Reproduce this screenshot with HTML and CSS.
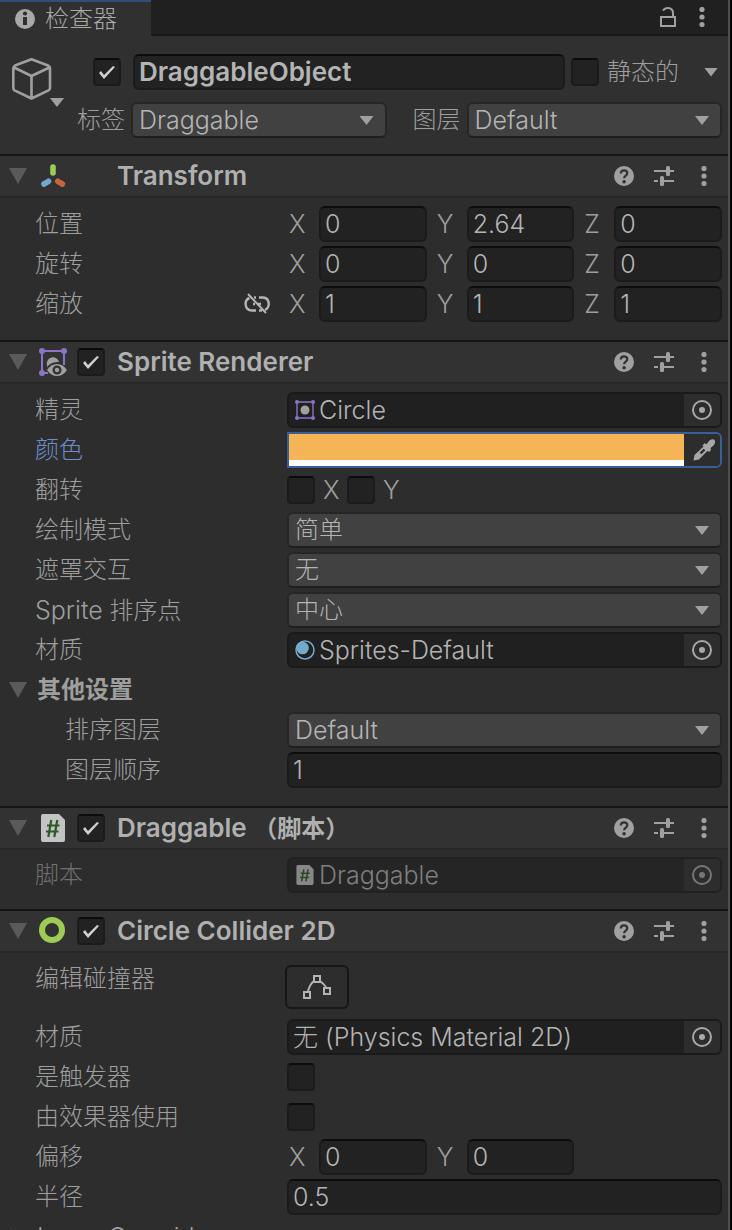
FILE: index.html
```
<!DOCTYPE html>
<html lang="zh-CN">
<head>
  <meta charset="UTF-8">
  <meta name="viewport" content="width=device-width, initial-scale=1.0">
  <title>检查器</title>
  <link rel="stylesheet" href="styles.css">
</head>
<body>
  <svg class="defs" aria-hidden="true">
    <symbol id="i-dots" viewBox="0 0 20 20">
      <circle cx="10" cy="2.5" r="2.6"/><circle cx="10" cy="10" r="2.6"/><circle cx="10" cy="17.5" r="2.6"/>
    </symbol>
    <symbol id="i-help" viewBox="0 0 20 20">
      <circle cx="10" cy="10" r="10"/>
      <path d="M6.8 7.6C6.8 5.4 8.2 4.3 10.1 4.3S13.3 5.5 13.3 7.3C13.3 9.6 10.1 9.7 10.1 12.2" fill="none" stroke="#323232" stroke-width="2.2"/>
      <circle cx="10.1" cy="15.7" r="1.8" fill="#323232"/>
    </symbol>
    <symbol id="i-preset" viewBox="0 0 20 20">
      <path d="M0 5h12M16 5h4M0 15h4M10 15h10" stroke="currentColor" stroke-width="2"/>
      <rect x="12" y="0" width="4" height="10" rx="1.5"/><rect x="6" y="10" width="4" height="10" rx="1.5"/>
    </symbol>
    <symbol id="i-target" viewBox="0 0 20 20">
      <circle cx="10" cy="10" r="9" fill="none" stroke="currentColor" stroke-width="2"/><circle cx="10" cy="10" r="3"/>
    </symbol>
    <symbol id="i-script" viewBox="0 0 24 28">
      <path d="M2 0h16l6 6v20a2 2 0 0 1-2 2H2a2 2 0 0 1-2-2V2a2 2 0 0 1 2-2z" fill="#c4c4c4"/>
      <path d="M10.3 6L7.3 23M16.3 6l-3 17M6 11.5h12.5M5 17.5h12.5" fill="none" stroke="#2c5a26" stroke-width="2.2"/>
    </symbol>
  </svg>

  <div class="inspector">
    <div class="tabbar">
      <div class="tab">
        <svg class="tab-icon" viewBox="0 0 20 20"><circle cx="10" cy="10" r="10"/><circle cx="10" cy="4.5" r="2.1" fill="#303030"/><path d="M8 8h4v8H8z" fill="#303030"/></svg>
        <span>检查器</span>
      </div>
      <div class="tab-tools">
        <button class="icon-btn" aria-label="锁定"><svg viewBox="0 0 20 20"><path d="M3 10h14v9H3zM15 10V6.5C15 3 13 1 10 1C7.5 1 6 2 5 3.6" fill="none" stroke="currentColor" stroke-width="2"/></svg></button>
        <button class="icon-btn" aria-label="菜单"><svg><use href="#i-dots"/></svg></button>
      </div>
    </div>

    <div class="object">
      <button class="object-icon" aria-label="图标">
        <svg class="outline" viewBox="0 0 46 50" stroke-width="2.6" stroke-linejoin="round"><path d="M19.5 1.3L36 7.5Q38 8.5 38 10.5V30Q38 31.5 36.5 32.3L19.5 40.5L2.5 32.3Q1.3 31.5 1.3 30V10.5Q1.3 8.5 3 7.5ZM2 9.5L19.5 18L37.5 9.5M19.5 18V40.5"/></svg>
        <span class="arrow"></span>
      </button>
      <div class="object-rows">
        <div class="object-row name-row">
          <input type="checkbox" aria-label="启用" checked>
          <input type="text" class="bold" aria-label="名称" value="DraggableObject">
          <input type="checkbox" id="static">
          <label for="static">静态的</label>
          <button class="static-menu" aria-label="静态选项"><span class="arrow"></span></button>
        </div>
        <div class="object-row tag-row">
          <label for="tag">标签</label>
          <div class="dropdown"><select id="tag"><option>Draggable</option></select></div>
          <label for="layer">图层</label>
          <div class="dropdown"><select id="layer"><option>Default</option></select></div>
        </div>
      </div>
    </div>

    <section class="component">
      <header>
        <button class="fold" aria-label="折叠"></button>
        <svg class="comp-icon" viewBox="0 0 28 28" stroke-width="5.6" stroke-linecap="round"><path d="M14 5v6" stroke="#9ccb56"/><path d="M9.5 19.3L5 22" stroke="#75a9cb"/><path d="M18.8 19.3l4.5 2.7" stroke="#c9653b"/></svg>
        <h2>Transform</h2>
        <div class="tools">
          <button class="icon-btn" aria-label="帮助"><svg><use href="#i-help"/></svg></button>
          <button class="icon-btn" aria-label="预设"><svg><use href="#i-preset"/></svg></button>
          <button class="icon-btn" aria-label="菜单"><svg><use href="#i-dots"/></svg></button>
        </div>
      </header>
      <div class="fields">
        <div class="row">
          <span class="name">位置</span>
          <div class="vector">
            <label for="px">X</label><input type="text" id="px" value="0">
            <label for="py">Y</label><input type="text" id="py" value="2.64">
            <label for="pz">Z</label><input type="text" id="pz" value="0">
          </div>
        </div>
        <div class="row">
          <span class="name">旋转</span>
          <div class="vector">
            <label for="rx">X</label><input type="text" id="rx" value="0">
            <label for="ry">Y</label><input type="text" id="ry" value="0">
            <label for="rz">Z</label><input type="text" id="rz" value="0">
          </div>
        </div>
        <div class="row">
          <span class="name">缩放
            <button class="link-btn" aria-label="约束比例"><svg class="outline" viewBox="0 0 26 22" stroke-width="2.4"><path d="M5.5 5C0 7 0 17 8 17.5H12M10 4.5h2M15 4.5h4C26 5 26.5 14 21 17M9 11h2M13 11h4M15 17.5h3"/><path d="M4 1l18 19" stroke-width="2"/></svg></button>
          </span>
          <div class="vector">
            <label for="sx">X</label><input type="text" id="sx" value="1">
            <label for="sy">Y</label><input type="text" id="sy" value="1">
            <label for="sz">Z</label><input type="text" id="sz" value="1">
          </div>
        </div>
      </div>
    </section>

    <section class="component">
      <header>
        <button class="fold" aria-label="折叠"></button>
        <svg class="comp-icon" viewBox="0 0 28 28">
          <path d="M3 3h22v14M3 3v22h6" fill="none" stroke="#8b73c6" stroke-width="2"/>
          <g fill="#8b73c6"><circle cx="3" cy="3" r="3"/><circle cx="25" cy="3" r="3"/><circle cx="3" cy="25" r="3"/></g>
          <path d="M8 17a6 6 0 1 1 12-3C15 14 11 15 8 19z" fill="#a0a0a0"/>
          <path d="M8 22Q12 16 18 16T28 22Q24 28 18 28T8 22z" fill="#a0a0a0"/>
          <circle cx="18" cy="22" r="4.5" fill="#323232"/><circle cx="18" cy="22" r="2.2" fill="#a0a0a0"/>
        </svg>
        <input type="checkbox" aria-label="启用 Sprite Renderer" checked>
        <h2>Sprite Renderer</h2>
        <div class="tools">
          <button class="icon-btn" aria-label="帮助"><svg><use href="#i-help"/></svg></button>
          <button class="icon-btn" aria-label="预设"><svg><use href="#i-preset"/></svg></button>
          <button class="icon-btn" aria-label="菜单"><svg><use href="#i-dots"/></svg></button>
        </div>
      </header>
      <div class="fields">
        <div class="row">
          <span class="name">精灵</span>
          <div class="object-field">
            <svg class="asset-icon" viewBox="0 0 20 20"><path d="M2 2h16v16H2z" fill="none" stroke="#8b73c6" stroke-width="1.4"/><g fill="#8b73c6"><circle cx="2" cy="2" r="2"/><circle cx="18" cy="2" r="2"/><circle cx="2" cy="18" r="2"/><circle cx="18" cy="18" r="2"/></g><circle cx="10" cy="10" r="4.5" fill="#a0a0a0"/></svg>
            <span class="asset">Circle</span>
            <button class="picker" aria-label="选择精灵"><svg><use href="#i-target"/></svg></button>
          </div>
        </div>
        <div class="row focused">
          <label class="name" for="color">颜色</label>
          <div class="color-field">
            <input type="color" id="color" value="#f5b556">
            <button class="picker" aria-label="吸管"><svg class="dropper" viewBox="0 0 22 22"><path d="M0.5 21.5L1.5 16L10.5 7.5L9.5 6.5L11.5 4.3L13.5 5.2L16 2C18 0 20.5 0 21.5 1C22.5 3 22 5 20.5 6.5L17.5 9L18 11L16 13L14.5 11.8L6 20.5Z"/><path d="M7.5 14.5L11.5 10.5" stroke="#2d2d2d" stroke-width="2.4"/></svg></button>
          </div>
        </div>
        <div class="row">
          <span class="name">翻转</span>
          <div class="checks">
            <input type="checkbox" id="flipx"><label for="flipx">X</label>
            <input type="checkbox" id="flipy"><label for="flipy">Y</label>
          </div>
        </div>
        <div class="row">
          <label class="name" for="drawmode">绘制模式</label>
          <div class="dropdown"><select id="drawmode" class="zh"><option>简单</option></select></div>
        </div>
        <div class="row">
          <label class="name" for="mask">遮罩交互</label>
          <div class="dropdown"><select id="mask" class="zh"><option>无</option></select></div>
        </div>
        <div class="row">
          <label class="name" for="sortpoint"><span><span class="latin">Sprite</span> 排序点</span></label>
          <div class="dropdown"><select id="sortpoint" class="zh"><option>中心</option></select></div>
        </div>
        <div class="row">
          <span class="name">材质</span>
          <div class="object-field">
            <svg class="asset-icon" viewBox="0 0 20 20"><circle cx="10" cy="10" r="9" fill="none" stroke="#75a9cb" stroke-width="1.5"/><circle cx="7.5" cy="8" r="6.3" fill="#75a9cb"/></svg>
            <span class="asset">Sprites-Default</span>
            <button class="picker" aria-label="选择材质"><svg><use href="#i-target"/></svg></button>
          </div>
        </div>
        <div class="row foldout">
          <button class="fold" aria-label="折叠"></button>
          <span class="bold">其他设置</span>
        </div>
        <div class="row indent">
          <label class="name" for="sortlayer">排序图层</label>
          <div class="dropdown"><select id="sortlayer"><option>Default</option></select></div>
        </div>
        <div class="row indent">
          <label class="name" for="order">图层顺序</label>
          <input type="text" id="order" value="1">
        </div>
      </div>
    </section>

    <section class="component">
      <header>
        <button class="fold" aria-label="折叠"></button>
        <svg class="comp-icon"><use href="#i-script"/></svg>
        <input type="checkbox" aria-label="启用 Draggable" checked>
        <h2>Draggable <span class="zh">（脚本）</span></h2>
        <div class="tools">
          <button class="icon-btn" aria-label="帮助"><svg><use href="#i-help"/></svg></button>
          <button class="icon-btn" aria-label="预设"><svg><use href="#i-preset"/></svg></button>
          <button class="icon-btn" aria-label="菜单"><svg><use href="#i-dots"/></svg></button>
        </div>
      </header>
      <div class="fields script-fields">
        <div class="row disabled">
          <span class="name">脚本</span>
          <div class="object-field">
            <svg class="asset-icon"><use href="#i-script"/></svg>
            <span class="asset">Draggable</span>
            <button class="picker" aria-label="选择脚本" disabled><svg><use href="#i-target"/></svg></button>
          </div>
        </div>
      </div>
    </section>

    <section class="component">
      <header>
        <button class="fold" aria-label="折叠"></button>
        <svg class="comp-icon" viewBox="0 0 28 28"><circle cx="13" cy="13" r="10" fill="none" stroke="#9ccb56" stroke-width="6"/></svg>
        <input type="checkbox" aria-label="启用 Circle Collider 2D" checked>
        <h2>Circle Collider 2D</h2>
        <div class="tools">
          <button class="icon-btn" aria-label="帮助"><svg><use href="#i-help"/></svg></button>
          <button class="icon-btn" aria-label="预设"><svg><use href="#i-preset"/></svg></button>
          <button class="icon-btn" aria-label="菜单"><svg><use href="#i-dots"/></svg></button>
        </div>
      </header>
      <div class="fields">
        <div class="row edit-row">
          <span class="name">编辑碰撞器</span>
          <button class="edit-btn" aria-label="编辑碰撞器"><svg class="outline" viewBox="0 0 28 24" stroke-width="2"><path d="M1 17h6v6H1zM11 1h6v6h-6zM21 13h6v6h-6z"/><path d="M5 16Q7 9 11 6M17 6Q21 9 23 12"/></svg></button>
        </div>
        <div class="row">
          <span class="name">材质</span>
          <div class="object-field">
            <span class="asset">无 (Physics Material 2D)</span>
            <button class="picker" aria-label="选择材质"><svg><use href="#i-target"/></svg></button>
          </div>
        </div>
        <div class="row">
          <label class="name" for="trigger">是触发器</label>
          <div class="checks"><input type="checkbox" id="trigger"></div>
        </div>
        <div class="row">
          <label class="name" for="effector">由效果器使用</label>
          <div class="checks"><input type="checkbox" id="effector"></div>
        </div>
        <div class="row">
          <span class="name">偏移</span>
          <div class="vector">
            <label for="ox">X</label><input type="text" id="ox" value="0">
            <label for="oy">Y</label><input type="text" id="oy" value="0">
          </div>
        </div>
        <div class="row">
          <label class="name" for="radius">半径</label>
          <input type="text" id="radius" value="0.5">
        </div>
        <div class="row foldout">
          <button class="fold closed" aria-label="展开"></button>
          <span class="latin">Layer Overrides</span>
        </div>
      </div>
    </section>
  </div>
</body>
</html>
```
FILE: styles.css
```
* {
  box-sizing: border-box;
}
body {
  margin: 0;
  height: 100vh;
  overflow: hidden;
  background-color: #2d2d2d;
  color: #9e9e9e;
  font-family: Inter, "Noto Sans CJK SC", sans-serif;
  font-size: 24px;
  font-weight: 300;
  line-height: 36px;
}
.defs {
  display: none;
}
svg {
  display: block;
  fill: currentColor;
}
.outline {
  fill: none;
  stroke: currentColor;
}
button,
input,
select {
  margin: 0;
  padding: 0;
  border: none;
  background: none;
  color: #b4b4b4;
  font: inherit;
}
.inspector {
  min-height: 100vh;
  border-right: 2px solid #050505;
  box-shadow: inset -2px 0 #4d4d4d;
  padding-right: 2px;
}
.bold {
  font-weight: 600;
}
.latin {
  font-size: 25px;
}

/* Tabs */
.tabbar {
  display: flex;
  justify-content: space-between;
  height: 36px;
  background-color: #202020;
}
.tab {
  display: flex;
  align-items: center;
  gap: 10px;
  width: 151px;
  padding-left: 15px;
  background-color: #303030;
  border-top: 2px solid #2c4f7c;
  color: #a8a8a8;
}
.tab-icon {
  width: 20px;
  height: 20px;
}
.tab-tools {
  display: flex;
  flex: 1;
  align-items: center;
  justify-content: flex-end;
  gap: 14px;
  padding-right: 16px;
  border-bottom: 2px solid #1a1a1a;
}
.icon-btn {
  width: 20px;
  height: 20px;
}
.icon-btn svg {
  width: 20px;
  height: 20px;
  color: #a0a0a0;
}

/* Form controls */
input[type="text"] {
  width: 100%;
  min-width: 0;
  height: 36px;
  padding: 0 4px;
  background-color: #222;
  border: 2px solid #1b1b1b;
  border-top-color: #0c0c0c;
  border-radius: 6px;
  font-size: 25px;
}
input[type="text"].bold {
  font-size: 26px;
  font-weight: 600;
}
input[type="checkbox"] {
  appearance: none;
  flex: none;
  width: 28px;
  height: 28px;
  background-color: #222;
  border: 2px solid #1b1b1b;
  border-top-color: #0c0c0c;
  border-radius: 4px;
}
input[type="checkbox"]:checked::before {
  content: "";
  display: block;
  width: 24px;
  height: 24px;
  background-color: #d0d0d0;
  clip-path: polygon(4px 13px, 6px 11px, 9px 15px, 18px 6px, 20px 7px, 9px 19px);
}
.dropdown {
  position: relative;
  min-width: 0;
}
.dropdown select {
  appearance: none;
  display: block;
  width: 100%;
  height: 36px;
  padding: 0 36px 0 6px;
  background-color: #414141;
  border: 2px solid #262626;
  border-bottom-color: #1e1e1e;
  border-radius: 6px;
  font-size: 25px;
  line-height: 32px;
}
.dropdown select.zh,
.zh {
  font-size: 24px;
}
.arrow,
.dropdown::after {
  width: 14px;
  height: 9px;
  background-color: #a0a0a0;
  clip-path: polygon(0 0, 100% 0, 50% 100%);
}
.dropdown::after {
  content: "";
  position: absolute;
  top: 14px;
  right: 13px;
  pointer-events: none;
}

/* Object header */
.object {
  display: flex;
  height: 118px;
  padding: 18px 6px 0 0;
  background-color: #303030;
}
.object-icon {
  position: relative;
  display: flex;
  align-items: flex-start;
  width: 77px;
  height: 64px;
  padding: 4px 0 0 12px;
  color: #a0a0a0;
}
.object-icon svg {
  flex: none;
  width: 46px;
  height: 50px;
}
.object-icon .arrow {
  position: absolute;
  left: 50px;
  top: 44px;
}
.object-rows {
  flex: 1;
  min-width: 0;
}
.object-row {
  display: flex;
  align-items: center;
  height: 36px;
  margin-bottom: 12px;
}
.name-row {
  gap: 6px;
  padding-left: 16px;
}
.name-row input[type="text"] {
  flex: 1;
  margin-left: 6px;
}
.name-row label {
  margin-left: 2px;
}
.static-menu {
  display: flex;
  justify-content: flex-end;
  width: 37px;
  padding-right: 4px;
}
.tag-row .dropdown {
  flex: 1;
  margin-left: 6px;
}
.tag-row .dropdown + label {
  margin-left: 26px;
}

/* Components */
.component header {
  display: flex;
  align-items: center;
  height: 44px;
  padding: 0 14px 0 9px;
  background-color: #323232;
  border-top: 2px solid #151515;
  border-bottom: 2px solid #272727;
}
.fold {
  flex: none;
  width: 18px;
  height: 16px;
  background-color: #5a5a5a;
  clip-path: polygon(0 0, 100% 0, 50% 100%);
}
.fold.closed {
  clip-path: polygon(20% 0, 90% 50%, 20% 100%);
}
.comp-icon {
  width: 28px;
  height: 28px;
  margin: 0 10px 0 12px;
}
.comp-icon + h2 {
  margin-left: 40px;
}
h2 {
  flex: 1;
  margin: 0 0 0 12px;
  color: #b0b0b0;
  font-size: 26px;
  font-weight: 600;
  line-height: 36px;
  white-space: nowrap;
}
.tools {
  display: flex;
  gap: 20px;
}
.fields {
  display: grid;
  gap: 4px;
  padding: 8px 6px 18px 0;
}
.script-fields {
  padding: 7px 6px 16px 0;
}
.row {
  display: grid;
  grid-template-columns: 252px minmax(0, 1fr);
  min-height: 36px;
  padding-left: 35px;
}
.row.indent {
  grid-template-columns: 222px minmax(0, 1fr);
  padding-left: 65px;
}
.row .name {
  display: flex;
  align-items: center;
  justify-content: space-between;
  height: 36px;
  white-space: nowrap;
}
.row.foldout {
  display: flex;
  align-items: center;
  gap: 10px;
  padding-left: 9px;
}
.focused .name {
  color: #6c8dc9;
}
.link-btn {
  width: 26px;
  height: 22px;
  margin-right: 17px;
}
.link-btn svg {
  width: 26px;
  height: 22px;
}
.vector {
  display: grid;
  grid-template-columns: 32px 1fr 40px 1fr 40px 1fr;
}
.vector label {
  padding-left: 10px;
  font-size: 25px;
}
.vector label:first-child {
  padding-left: 2px;
}
.checks {
  display: flex;
  align-items: center;
}
.checks label {
  width: 32px;
  padding-left: 8px;
  font-size: 25px;
}
.object-field,
.color-field {
  display: flex;
  align-items: center;
  height: 36px;
  background-color: #202020;
  border: 2px solid #1a1a1a;
  border-radius: 6px;
  overflow: hidden;
}
.asset-icon {
  width: 20px;
  height: 20px;
  margin-left: 6px;
}
.asset {
  flex: 1;
  padding-left: 4px;
  color: #b4b4b4;
  font-size: 25px;
  white-space: nowrap;
}
.picker {
  display: flex;
  align-items: center;
  justify-content: center;
  width: 36px;
  height: 32px;
  background-color: #2d2d2d;
  color: #a8a8a8;
}
.picker svg {
  width: 20px;
  height: 20px;
}
.picker .dropper {
  width: 22px;
  height: 22px;
  margin-left: 4px;
}
.color-field {
  background-color: #2d2d2d;
  border-color: #3a5f97;
  border-radius: 0 6px 6px 0;
}
.color-field input {
  flex: 1;
  height: 32px;
}
.color-field input::-webkit-color-swatch-wrapper {
  padding: 0;
}
.color-field input::-webkit-color-swatch {
  border: none;
  border-bottom: 6px solid #fff;
  border-radius: 0;
}
.disabled {
  opacity: 0.6;
}
.edit-row {
  grid-template-columns: 250px 64px;
  height: 54px;
}
.edit-btn {
  display: flex;
  align-items: center;
  justify-content: center;
  width: 64px;
  height: 44px;
  margin-top: 4px;
  border: 2px solid #171717;
  border-radius: 6px;
}
.edit-btn svg {
  width: 28px;
  height: 24px;
}
```
